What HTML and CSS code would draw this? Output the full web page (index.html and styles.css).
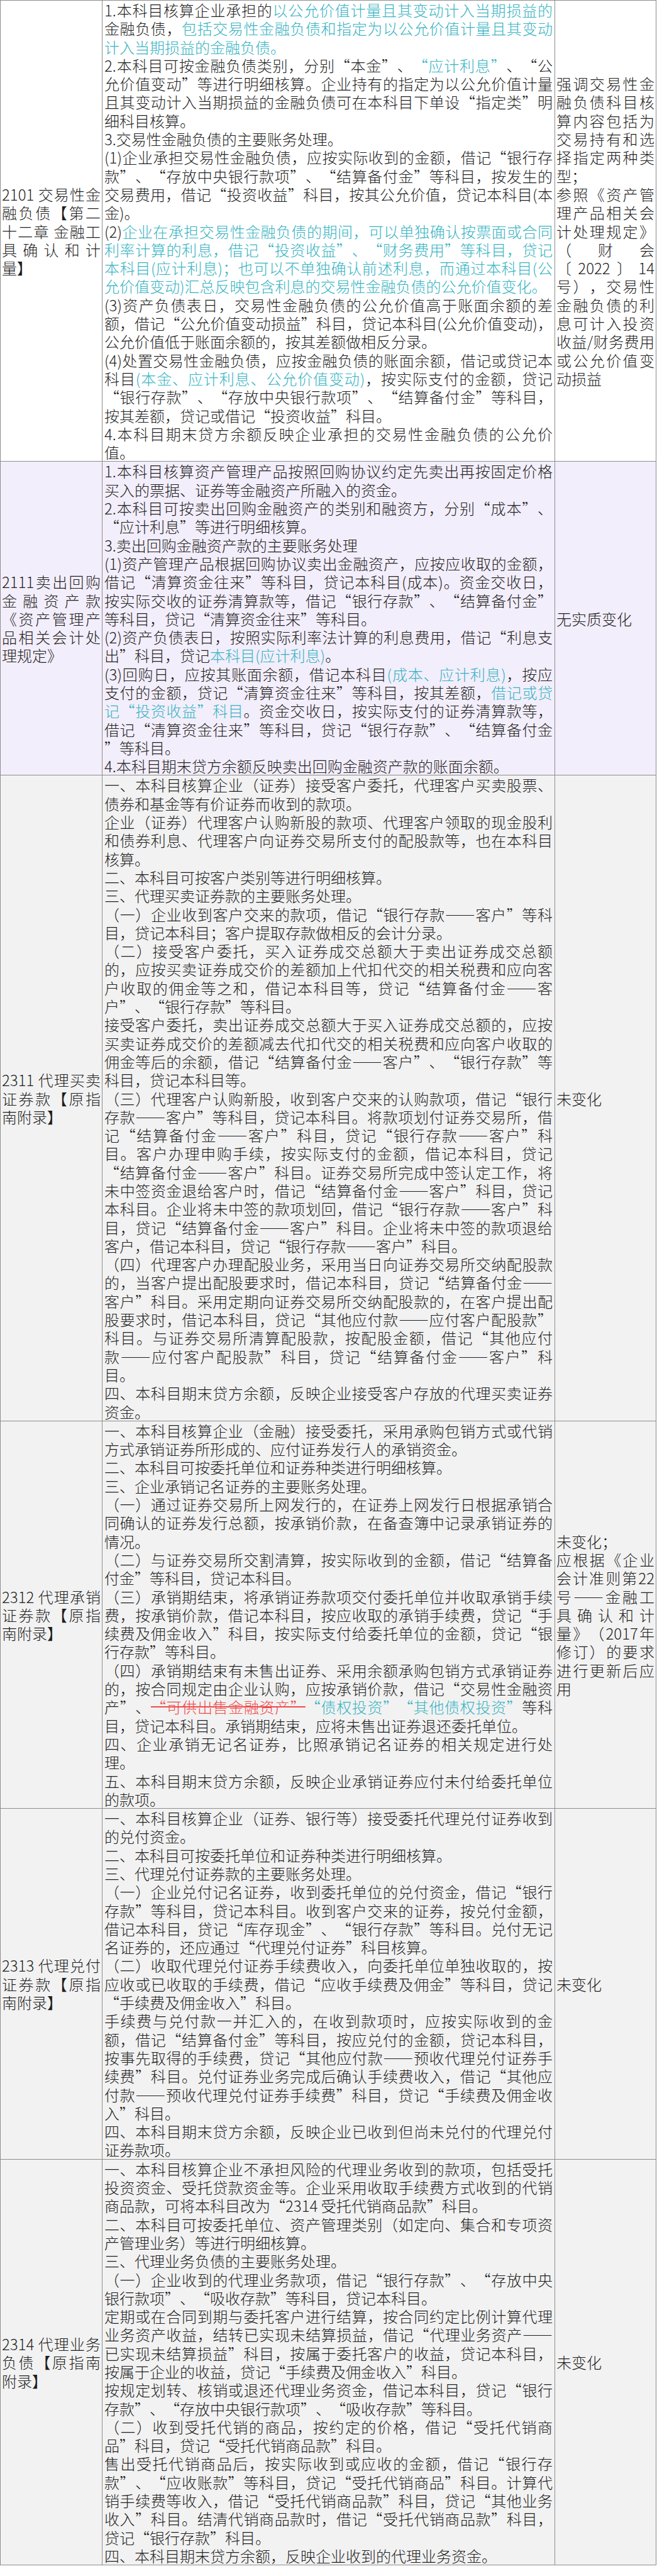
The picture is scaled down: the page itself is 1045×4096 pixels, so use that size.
FILE: index.html
```html
<!DOCTYPE html>
<html lang="zh-CN">
<head>
<meta charset="utf-8">
<title>金融负债科目对照</title>
<link rel="stylesheet" href="styles.css">
</head>
<body>
<table class="sheet">
<tbody>
<tr class="r-white">
<td class="name">2101 交易性金融负债【第二十二章 金融工具确认和计量】</td>
<td class="rule">
<p><span>1.本科目核算企业承担的<mark class="hl">以公允价值计量且其变动计入当期损益的</mark></span><span>金融负债，<mark class="hl">包括交易性金融负债和指定为以公允价值计量且其变动</mark></span><span><mark class="hl">计入当期损益的金融负债。</mark></span></p>
<p><span>2.本科目可按金融负债类别，分别“本金”、<mark class="hl">“应计利息”</mark>、“公</span><span>允价值变动”等进行明细核算。企业持有的指定为以公允价值计量</span><span>且其变动计入当期损益的金融负债可在本科目下单设“指定类”明</span><span>细科目核算。</span></p>
<p><span>3.交易性金融负债的主要账务处理。</span></p>
<p><span>(1)企业承担交易性金融负债，应按实际收到的金额，借记“银行存</span><span>款”、“存放中央银行款项”、“结算备付金”等科目，按发生的</span><span>交易费用，借记“投资收益”科目，按其公允价值，贷记本科目(本</span><span>金)。</span></p>
<p><span>(2)<mark class="hl">企业在承担交易性金融负债的期间，可以单独确认按票面或合同</mark></span><span><mark class="hl">利率计算的利息，借记“投资收益”、“财务费用”等科目，贷记</mark></span><span><mark class="hl">本科目(应计利息)；也可以不单独确认前述利息，而通过本科目(公</mark></span><span><mark class="hl">允价值变动)汇总反映包含利息的交易性金融负债的公允价值变化。</mark></span></p>
<p><span>(3)资产负债表日，交易性金融负债的公允价值高于账面余额的差</span><span>额，借记“公允价值变动损益”科目，贷记本科目(公允价值变动)，</span><span>公允价值低于账面余额的，按其差额做相反分录。</span></p>
<p><span>(4)处置交易性金融负债，应按金融负债的账面余额，借记或贷记本</span><span>科目<mark class="hl">(本金、应计利息、公允价值变动)</mark>，按实际支付的金额，贷记</span><span>“银行存款”、“存放中央银行款项”、“结算备付金”等科目，</span><span>按其差额，贷记或借记“投资收益”科目。</span></p>
<p><span>4.本科目期末贷方余额反映企业承担的交易性金融负债的公允价</span><span>值。</span></p>
</td>
<td class="note">
<p><span>强调交易性金</span><span>融负债科目核</span><span>算内容包括为</span><span>交易持有和选</span><span>择指定两种类</span><span>型；</span></p>
<p><span>参照《资产管</span><span>理产品相关会</span><span>计处理规定》</span><span>（财会</span><span>〔2022〕14</span><span>号），交易性</span><span>金融负债的利</span><span>息可计入投资</span><span>收益/财务费用</span><span>或公允价值变</span><span>动损益</span></p>
</td>
</tr>
<tr class="r-violet">
<td class="name">2111卖出回购金融资产款《资产管理产品相关会计处理规定》</td>
<td class="rule">
<p><span>1.本科目核算资产管理产品按照回购协议约定先卖出再按固定价格</span><span>买入的票据、证券等金融资产所融入的资金。</span></p>
<p><span>2.本科目可按卖出回购金融资产的类别和融资方，分别“成本”、</span><span>“应计利息”等进行明细核算。</span></p>
<p><span>3.卖出回购金融资产款的主要账务处理</span></p>
<p><span>(1)资产管理产品根据回购协议卖出金融资产，应按应收取的金额，</span><span>借记“清算资金往来”等科目，贷记本科目(成本)。资金交收日，</span><span>按实际交收的证券清算款等，借记“银行存款”、“结算备付金”</span><span>等科目，贷记“清算资金往来”等科目。</span></p>
<p><span>(2)资产负债表日，按照实际利率法计算的利息费用，借记“利息支</span><span>出”科目，贷记<mark class="hl">本科目(应计利息)</mark>。</span></p>
<p><span>(3)回购日，应按其账面余额，借记本科目<mark class="hl">(成本、应计利息)</mark>，按应</span><span>支付的金额，贷记“清算资金往来”等科目，按其差额，<mark class="hl">借记或贷</mark></span><span><mark class="hl">记“投资收益”科目</mark>。资金交收日，按实际支付的证券清算款等，</span><span>借记“清算资金往来”等科目，贷记“银行存款”、“结算备付金</span><span>”等科目。</span></p>
<p><span>4.本科目期末贷方余额反映卖出回购金融资产款的账面余额。</span></p>
</td>
<td class="note"><p><span>无实质变化</span></p></td>
</tr>
<tr class="r-gray">
<td class="name">2311 代理买卖证券款【原指南附录】</td>
<td class="rule">
<p><span>一、本科目核算企业（证券）接受客户委托，代理客户买卖股票、</span><span>债券和基金等有价证券而收到的款项。</span></p>
<p><span>企业（证券）代理客户认购新股的款项、代理客户领取的现金股利</span><span>和债券利息、代理客户向证券交易所支付的配股款等，也在本科目</span><span>核算。</span></p>
<p><span>二、本科目可按客户类别等进行明细核算。</span></p>
<p><span>三、代理买卖证券款的主要账务处理。</span></p>
<p><span>（一）企业收到客户交来的款项，借记“银行存款——客户”等科</span><span>目，贷记本科目；客户提取存款做相反的会计分录。</span></p>
<p><span>（二）接受客户委托，买入证券成交总额大于卖出证券成交总额</span><span>的，应按买卖证券成交价的差额加上代扣代交的相关税费和应向客</span><span>户收取的佣金等之和，借记本科目等，贷记“结算备付金——客</span><span>户”、“银行存款”等科目。</span></p>
<p><span>接受客户委托，卖出证券成交总额大于买入证券成交总额的，应按</span><span>买卖证券成交价的差额减去代扣代交的相关税费和应向客户收取的</span><span>佣金等后的余额，借记“结算备付金——客户”、“银行存款”等</span><span>科目，贷记本科目等。</span></p>
<p><span>（三）代理客户认购新股，收到客户交来的认购款项，借记“银行</span><span>存款——客户”等科目，贷记本科目。将款项划付证券交易所，借</span><span>记“结算备付金——客户”科目，贷记“银行存款——客户”科</span><span>目。客户办理申购手续，按实际支付的金额，借记本科目，贷记</span><span>“结算备付金——客户”科目。证券交易所完成中签认定工作，将</span><span>未中签资金退给客户时，借记“结算备付金——客户”科目，贷记</span><span>本科目。企业将未中签的款项划回，借记“银行存款——客户”科</span><span>目，贷记“结算备付金——客户”科目。企业将未中签的款项退给</span><span>客户，借记本科目，贷记“银行存款——客户”科目。</span></p>
<p><span>（四）代理客户办理配股业务，采用当日向证券交易所交纳配股款</span><span>的，当客户提出配股要求时，借记本科目，贷记“结算备付金——</span><span>客户”科目。采用定期向证券交易所交纳配股款的，在客户提出配</span><span>股要求时，借记本科目，贷记“其他应付款——应付客户配股款”</span><span>科目。与证券交易所清算配股款，按配股金额，借记“其他应付</span><span>款——应付客户配股款”科目，贷记“结算备付金——客户”科</span><span>目。</span></p>
<p><span>四、本科目期末贷方余额，反映企业接受客户存放的代理买卖证券</span><span>资金。</span></p>
</td>
<td class="note"><p><span>未变化</span></p></td>
</tr>
<tr class="r-gray">
<td class="name">2312 代理承销证券款【原指南附录】</td>
<td class="rule">
<p><span>一、本科目核算企业（金融）接受委托，采用承购包销方式或代销</span><span>方式承销证券所形成的、应付证券发行人的承销资金。</span></p>
<p><span>二、本科目可按委托单位和证券种类进行明细核算。</span></p>
<p><span>三、企业承销记名证券的主要账务处理。</span></p>
<p><span>（一）通过证券交易所上网发行的，在证券上网发行日根据承销合</span><span>同确认的证券发行总额，按承销价款，在备查簿中记录承销证券的</span><span>情况。</span></p>
<p><span>（二）与证券交易所交割清算，按实际收到的金额，借记“结算备</span><span>付金”等科目，贷记本科目。</span></p>
<p><span>（三）承销期结束，将承销证券款项交付委托单位并收取承销手续</span><span>费，按承销价款，借记本科目，按应收取的承销手续费，贷记“手</span><span>续费及佣金收入”科目，按实际支付给委托单位的金额，贷记“银</span><span>行存款”等科目。</span></p>
<p><span>（四）承销期结束有未售出证券、采用余额承购包销方式承销证券</span><span>的，按合同规定由企业认购，应按承销价款，借记“交易性金融资</span><span>产”、<del class="strike">“可供出售金融资产”</del><mark class="hl">“债权投资”</mark><mark class="hl">“其他债权投资”</mark>等科</span><span>目，贷记本科目。承销期结束，应将未售出证券退还委托单位。</span></p>
<p><span>四、企业承销无记名证券，比照承销记名证券的相关规定进行处</span><span>理。</span></p>
<p><span>五、本科目期末贷方余额，反映企业承销证券应付未付给委托单位</span><span>的款项。</span></p>
</td>
<td class="note">
<p><span>未变化；</span></p>
<p><span>应根据《企业</span><span>会计准则第22</span><span>号——金融工</span><span>具确认和计</span><span>量》（2017年</span><span>修订）的要求</span><span>进行更新后应</span><span>用</span></p>
</td>
</tr>
<tr class="r-gray">
<td class="name">2313 代理兑付证券款【原指南附录】</td>
<td class="rule">
<p><span>一、本科目核算企业（证券、银行等）接受委托代理兑付证券收到</span><span>的兑付资金。</span></p>
<p><span>二、本科目可按委托单位和证券种类进行明细核算。</span></p>
<p><span>三、代理兑付证券款的主要账务处理。</span></p>
<p><span>（一）企业兑付记名证券，收到委托单位的兑付资金，借记“银行</span><span>存款”等科目，贷记本科目。收到客户交来的证券，按兑付金额，</span><span>借记本科目，贷记“库存现金”、“银行存款”等科目。兑付无记</span><span>名证券的，还应通过“代理兑付证券”科目核算。</span></p>
<p><span>（二）收取代理兑付证券手续费收入，向委托单位单独收取的，按</span><span>应收或已收取的手续费，借记“应收手续费及佣金”等科目，贷记</span><span>“手续费及佣金收入”科目。</span></p>
<p><span>手续费与兑付款一并汇入的，在收到款项时，应按实际收到的金</span><span>额，借记“结算备付金”等科目，按应兑付的金额，贷记本科目，</span><span>按事先取得的手续费，贷记“其他应付款——预收代理兑付证券手</span><span>续费”科目。兑付证券业务完成后确认手续费收入，借记“其他应</span><span>付款——预收代理兑付证券手续费”科目，贷记“手续费及佣金收</span><span>入”科目。</span></p>
<p><span>四、本科目期末贷方余额，反映企业已收到但尚未兑付的代理兑付</span><span>证券款项。</span></p>
</td>
<td class="note"><p><span>未变化</span></p></td>
</tr>
<tr class="r-gray">
<td class="name">2314 代理业务负债【原指南附录】</td>
<td class="rule">
<p><span>一、本科目核算企业不承担风险的代理业务收到的款项，包括受托</span><span>投资资金、受托贷款资金等。企业采用收取手续费方式收到的代销</span><span>商品款，可将本科目改为“2314 受托代销商品款”科目。</span></p>
<p><span>二、本科目可按委托单位、资产管理类别（如定向、集合和专项资</span><span>产管理业务）等进行明细核算。</span></p>
<p><span>三、代理业务负债的主要账务处理。</span></p>
<p><span>（一）企业收到的代理业务款项，借记“银行存款”、“存放中央</span><span>银行款项”、“吸收存款”等科目，贷记本科目。</span></p>
<p><span>定期或在合同到期与委托客户进行结算，按合同约定比例计算代理</span><span>业务资产收益，结转已实现未结算损益，借记“代理业务资产——</span><span>已实现未结算损益”科目，按属于委托客户的收益，贷记本科目，</span><span>按属于企业的收益，贷记“手续费及佣金收入”科目。</span></p>
<p><span>按规定划转、核销或退还代理业务资金，借记本科目，贷记“银行</span><span>存款”、“存放中央银行款项”、“吸收存款”等科目。</span></p>
<p><span>（二）收到受托代销的商品，按约定的价格，借记“受托代销商</span><span>品”科目，贷记“受托代销商品款”科目。</span></p>
<p><span>售出受托代销商品后，按实际收到或应收的金额，借记“银行存</span><span>款”、“应收账款”等科目，贷记“受托代销商品”科目。计算代</span><span>销手续费等收入，借记“受托代销商品款”科目，贷记“其他业务</span><span>收入”科目。结清代销商品款时，借记“受托代销商品款”科目，</span><span>贷记“银行存款”科目。</span></p>
<p><span>四、本科目期末贷方余额，反映企业收到的代理业务资金。</span></p>
</td>
<td class="note"><p><span>未变化</span></p></td>
</tr>
</tbody>
</table>
</body>
</html>
```

FILE: styles.css
```css
html {
  background: #ffffff;
}

body {
  margin: 0;
  font-family: "Noto Sans CJK SC", "Noto Sans CJK JP", sans-serif;
  font-size: 24px;
  line-height: 29.3px;
  font-weight: 300;
  color: #1f1f1f;
  text-spacing-trim: space-all;
}

.sheet {
  border-collapse: collapse;
  margin: 0;
}

.sheet td {
  border: 1px solid #8d8d8d;
  padding: 0 2px;
  text-align: justify;
  vertical-align: middle;
}

.sheet p {
  margin: 0;
}

.sheet p > span {
  display: block;
  text-align: justify;
  text-align-last: justify;
}

.sheet p > span:last-child {
  text-align-last: auto;
}

.name {
  width: 157px;
}

.rule {
  width: 713px;
  padding: 0 3px;
}

.sheet td.rule {
  padding: 0 3px;
}

.note {
  width: 156px;
}

.r-white {
  background: #ffffff;
}

.r-violet {
  background: #f3eefb;
}

.r-gray {
  background: #f2f2f2;
}

.hl {
  background: transparent;
  color: #35b3c2;
}

.strike {
  color: #ef4a4a;
  text-decoration: line-through;
  text-decoration-color: #ef4a4a;
}
```
